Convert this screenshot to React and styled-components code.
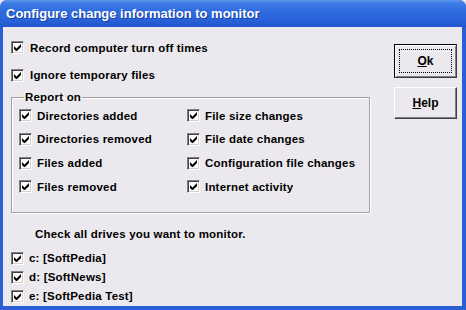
import styled, { createGlobalStyle } from "styled-components";

const Global = createGlobalStyle`
  html, body { margin: 0; padding: 0; background: #ebe9ed; }
  #root { width: 466px; height: 310px; }
`;

const Window = styled.div`
  width: 466px;
  height: 310px;
  box-sizing: border-box;
  background: #2a5fd6;
  border-radius: 7px 7px 0 0;
  display: flex;
  flex-direction: column;
  overflow: hidden;
  font-family: "Liberation Sans", Arial, sans-serif;
`;

const TitleBar = styled.div`
  height: 27px;
  flex: none;
  display: flex;
  align-items: center;
  padding: 0 0 0 6px;
  background: linear-gradient(
    to bottom,
    #5c97ec 0%,
    #3d7ce6 12%,
    #2f6be0 40%,
    #2a63db 70%,
    #2356cd 100%
  );
  color: #fff;
  font-weight: bold;
  font-size: 13px;
  text-shadow: 1px 1px 0 #1a3f9e;
`;

const Client = styled.div`
  flex: 1;
  min-height: 0;
  overflow: hidden;
  margin: 0 4px 4px 3px;
  background: #ebe9ed;
  display: flex;
  padding: 14px 0 0 8px;
`;

const Main = styled.div`
  width: 362px;
  display: flex;
  flex-direction: column;
`;

const Side = styled.div`
  display: flex;
  flex-direction: column;
  gap: 9px;
  padding: 3px 0 0 21px;
`;

const Row = styled.label`
  display: flex;
  align-items: center;
  height: ${(p) => p.$h || 24}px;
  font-size: 11.5px;
  letter-spacing: 0.2px;
  font-weight: bold;
  color: #000;
  white-space: nowrap;
`;

const Box = styled.span`
  width: 13px;
  height: 13px;
  box-sizing: border-box;
  background: #fff;
  border-top: 1px solid #808080;
  border-left: 1px solid #808080;
  border-right: 1px solid #fff;
  border-bottom: 1px solid #fff;
  box-shadow: inset 1px 1px 0 #404040, inset -1px -1px 0 #d4d0c8;
  display: flex;
  align-items: center;
  justify-content: center;
  margin-right: ${(p) => p.$gap || 5}px;
  flex: none;
`;

const Check = ({ label, h, gap }) => (
  <Row $h={h}>
    <Box $gap={gap}>
      <svg width="7" height="7" viewBox="0 0 7 7">
        <path d="M0 2v3l2 2h1l4-4V0L2.5 4.5z" fill="#000" />
      </svg>
    </Box>
    {label}
  </Row>
);

const Group = styled.fieldset`
  margin: 9px 0 0 0;
  padding: 0 0 13px 7px;
  width: 359px;
  box-sizing: border-box;
  border: 1px solid #a0a0a0;
  box-shadow: 1px 1px 0 #fff, inset 1px 1px 0 #fff;
  display: grid;
  grid-template-columns: 168px 1fr;
  grid-auto-rows: 23.7px;
  align-items: center;
`;

const Legend = styled.legend`
  font-size: 11.5px;
  letter-spacing: 0.2px;
  font-weight: bold;
  padding: 0 1px;
  margin-left: 5px;
  line-height: 13px;
`;

const Note = styled.div`
  font-size: 11.5px;
  letter-spacing: 0.2px;
  font-weight: bold;
  padding: 15px 0 0 24px;
  height: 22px;
`;

const Drives = styled.div`
  display: flex;
  flex-direction: column;
`;

const Button = styled.button`
  width: 63px;
  height: ${(p) => p.$h}px;
  box-sizing: border-box;
  background: #ebe9ed;
  font-family: "Liberation Sans", Arial, sans-serif;
  font-size: 12px;
  font-weight: bold;
  color: #000;
  border: 1px solid ${(p) => (p.$def ? "#000" : "#fff")};
  border-right-color: #404040;
  border-bottom-color: #404040;
  box-shadow: ${(p) =>
    p.$def
      ? "inset 1px 1px 0 #fff, inset -1px -1px 0 #808080"
      : "inset -1px -1px 0 #808080"};
  padding: 0;
  position: relative;
  u { text-decoration: underline; }
`;

const Focus = styled.span`
  position: absolute;
  inset: 4px;
  border: 1px dotted #000;
  display: flex;
  align-items: center;
  justify-content: center;
`;

const Spacer = styled.div`
  height: ${(p) => p.$h}px;
`;

export default function App() {
  return (
    <>
      <Global />
      <Window>
        <TitleBar>Configure change information to monitor</TitleBar>
        <Client>
          <Main>
            <Check label="Record computer turn off times" h={14} gap={6} />
            <Spacer $h={14} />
            <Check label="Ignore temporary files" h={14} gap={6} />
            <Group>
              <Legend>Report on</Legend>
              <Check label="Directories added" />
              <Check label="File size changes" />
              <Check label="Directories removed" />
              <Check label="File date changes" />
              <Check label="Files added" />
              <Check label="Configuration file changes" />
              <Check label="Files removed" />
              <Check label="Internet activity" />
            </Group>
            <Note>Check all drives you want to monitor.</Note>
            <Drives>
              <Check label="c: [SoftPedia]" h={19} />
              <Check label="d: [SoftNews]" h={19} />
              <Check label="e: [SoftPedia Test]" h={19} />
            </Drives>
          </Main>
          <Side>
            <Button $def $h={34}>
              <Focus>
                <u>O</u>k
              </Focus>
            </Button>
            <Button $h={32}>
              <u>H</u>elp
            </Button>
          </Side>
        </Client>
      </Window>
    </>
  );
}
